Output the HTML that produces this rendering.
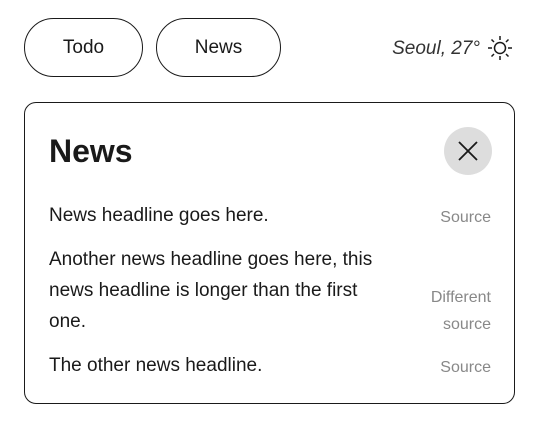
<!DOCTYPE html>
<html><head><style>
body{margin:0;width:540px;height:429px;background:#fff;font-family:"Liberation Sans",sans-serif;color:#1a1a1a;position:relative;overflow:hidden}
.pill{position:absolute;top:18px;height:57px;border:1.5px solid #1a1a1a;border-radius:30px;font-size:19px;line-height:57px;text-align:center}
.w{position:absolute;top:38px;left:380px;width:100px;text-align:right;font-style:italic;font-size:19px;color:#333}
.card{position:absolute;left:24px;top:102px;width:489px;height:300px;border:1.5px solid #1a1a1a;border-radius:12px}
h1{position:absolute;left:24px;top:30px;margin:0;font-size:32px;font-weight:bold}
.x{position:absolute;left:419px;top:24px;width:48px;height:48px;border-radius:50%;background:#ddd}
.t{position:absolute;left:24px;font-size:19px;line-height:31px;width:345px}
.s{position:absolute;right:23px;font-size:16px;line-height:27px;color:#888;text-align:right}
</style></head><body>
<div class="pill" style="left:24px;width:117px">Todo</div>
<div class="pill" style="left:156px;width:123px">News</div>
<div class="w">Seoul, 27°</div>
<svg style="position:absolute;left:486px;top:34px" width="28" height="28" viewBox="0 0 28 28" fill="none" stroke="#1a1a1a" stroke-width="1.5"><circle cx="14" cy="14" r="5.5"/><path d="M14 2v4M14 22v4M2 14h4M22 14h4M5.5 5.5l2.5 2.5M20 20l2.5 2.5M5.5 22.5L8 20M20 8l2.5-2.5"/></svg>
<div class="card">
<h1>News</h1>
<div class="x"><svg width="48" height="48" viewBox="0 0 48 48" stroke="#1a1a1a" stroke-width="1.8"><path d="M15 15L33 33M33 15L15 33"/></svg></div>
<div class="t" style="top:97px">News headline goes here.</div>
<div class="s" style="top:101px">Source</div>
<div class="t" style="top:141px">Another news headline goes here, this news headline is longer than the first one.</div>
<div class="s" style="top:181px">Different<br>source</div>
<div class="t" style="top:247px">The other news headline.</div>
<div class="s" style="top:251px">Source</div>
</div>
</body></html>
